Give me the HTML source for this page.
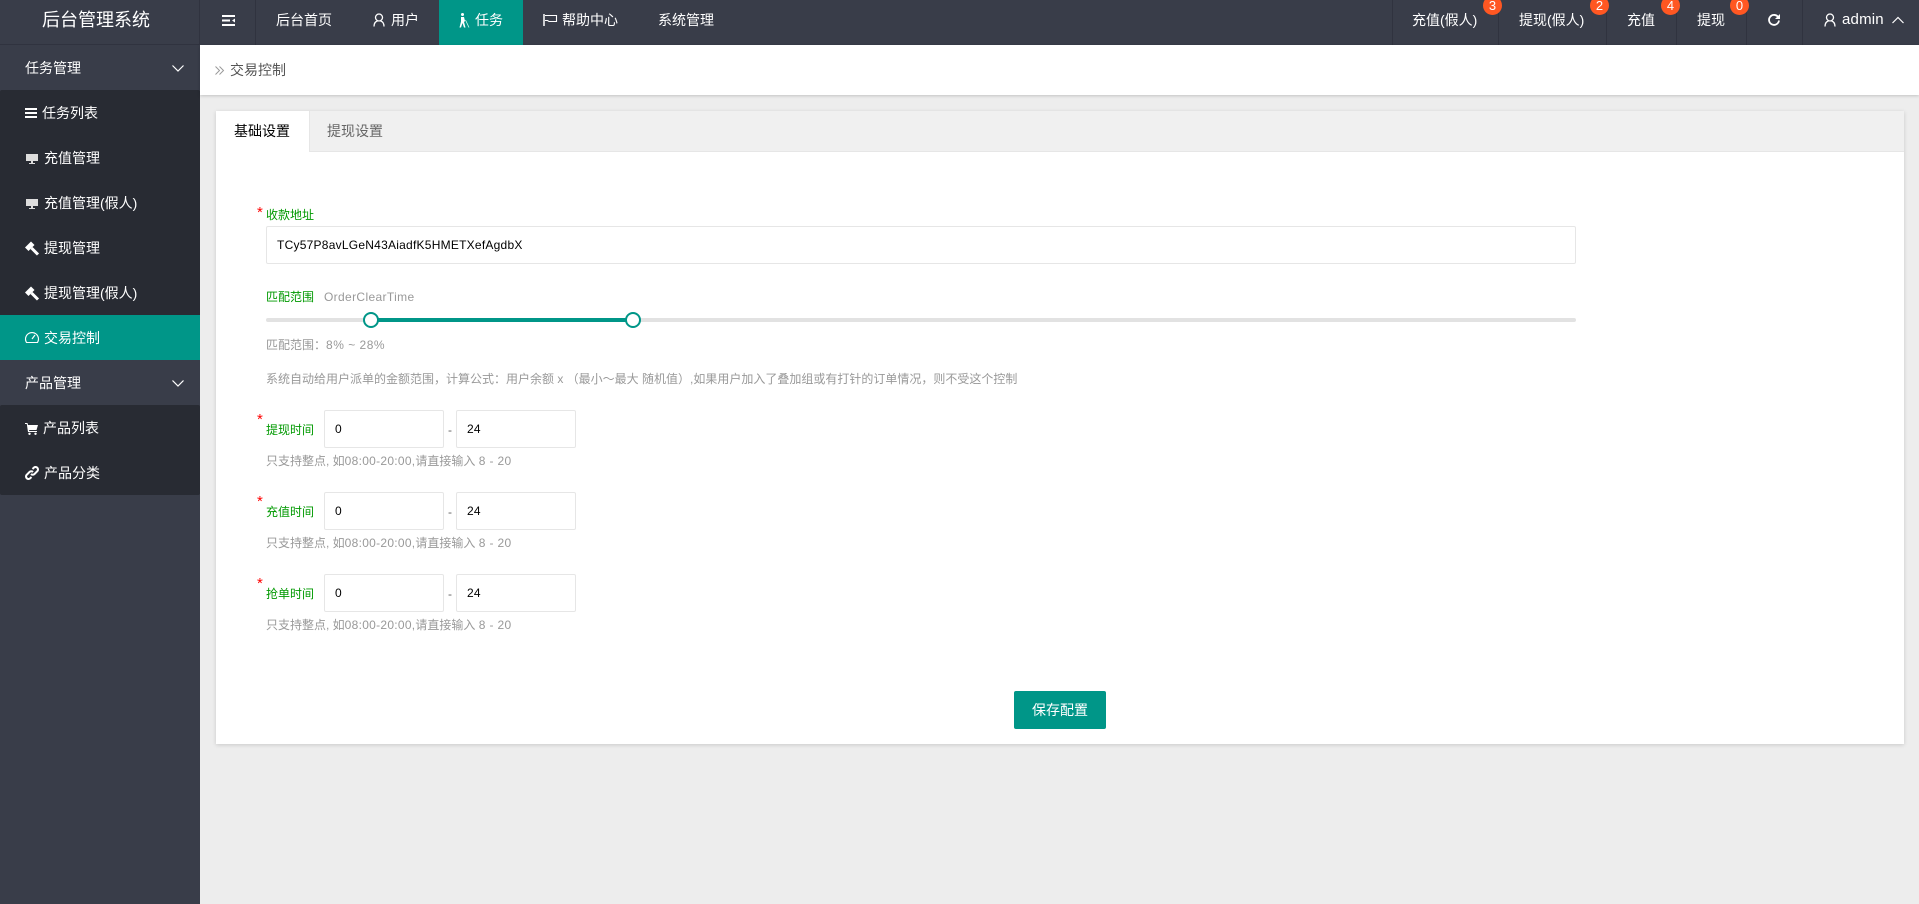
<!DOCTYPE html>
<html lang="zh-CN"><head><meta charset="utf-8"><title>后台管理系统</title>
<style>
*{box-sizing:border-box}
html,body{margin:0;padding:0;width:1919px;height:904px;overflow:hidden;background:#ededed;font-family:"Liberation Sans","Noto Sans CJK SC",sans-serif;font-size:14px;color:#666}
.a{position:absolute}
.t{position:absolute;white-space:nowrap;line-height:20px;height:20px}
.w{color:#fff}
.dv{position:absolute;top:0;width:1px;height:45px;background:#30333f}
.bd{position:absolute;top:-4px;width:19px;height:19px;border-radius:50%;background:#ff5722;color:#fff;text-align:center;font-size:13px;line-height:20px}
.g{color:#090;font-size:12px}
.h{color:#999;font-size:12px}
.s{color:#f00;font-size:15px;line-height:14px;height:14px}
.l{letter-spacing:.28px}
.i{position:absolute;height:38px;background:#fff;border:1px solid #e6e6e6;border-radius:2px;color:#000;font-size:12px;line-height:36px;padding-left:10px;white-space:nowrap;letter-spacing:.24px}
svg{position:absolute;overflow:visible}
</style></head><body>
<div class="a" style="left:0;top:0;width:1919px;height:45px;background:#393d49"></div>
<div class="a" style="left:0;top:44px;width:200px;height:1px;background:#30333f"></div>
<div class="t w" style="left:42px;top:9px;font-size:18px;line-height:22px;height:22px">后台管理系统</div>
<div class="dv" style="left:199px"></div><div class="dv" style="left:255px"></div>
<svg style="left:222px;top:15px" width="13" height="11" viewBox="0 0 13 11"><path d="M0 1h13M0 5.500h8M0 10h13" stroke="#fff" stroke-width="2" fill="none"/><path d="M13 3.500v4l-3-2z" fill="#fff"/></svg>
<div class="t w" style="left:276px;top:10px">后台首页</div>
<svg style="left:373px;top:13px" width="12" height="14" viewBox="0 0 12 14"><circle cx="6" cy="4.500" r="3.500" stroke="#fff" stroke-width="1.300" fill="none"/><path d="M1 13.500c0-3 1.500-5 3.500-5.500M11 13.500c0-3-1.500-5-3.500-5.500" stroke="#fff" stroke-width="1.300" fill="none"/></svg>
<div class="t w" style="left:391px;top:10px">用户</div>
<div class="a" style="left:439px;top:0;width:84px;height:45px;background:#009688"></div>
<svg style="left:458px;top:13px" width="12" height="15" viewBox="0 0 12 15"><circle cx="4.500" cy="1.500" r="1.500" fill="#fff"/><path d="M3 4h3l1 4 -1 1 1.500 5.500H6L4.500 10 3 14.500H1.500L3 8.500z" fill="#fff"/><path d="M7.500 7l3.500 7.500" stroke="#cfe" stroke-width=".8"/></svg>
<div class="t w" style="left:475px;top:10px">任务</div>
<svg style="left:543px;top:14px" width="15" height="12" viewBox="0 0 15 12"><path d="M1 0v12" stroke="#fff" stroke-width="1.500"/><path d="M2 1.500h11.500v6H6l-1.500-1H2" stroke="#fff" stroke-width="1.100" fill="none"/></svg>
<div class="t w" style="left:562px;top:10px">帮助中心</div>
<div class="t w" style="left:658px;top:10px">系统管理</div>

<div class="dv" style="left:1392px"></div><div class="dv" style="left:1498px"></div><div class="dv" style="left:1606px"></div><div class="dv" style="left:1676px"></div><div class="dv" style="left:1746px"></div><div class="dv" style="left:1802px"></div>
<div class="t w" style="left:1412px;top:10px">充值(假人)</div><div class="bd" style="left:1483px">3</div>
<div class="t w" style="left:1519px;top:10px">提现(假人)</div><div class="bd" style="left:1590px">2</div>
<div class="t w" style="left:1627px;top:10px">充值</div><div class="bd" style="left:1661px">4</div>
<div class="t w" style="left:1697px;top:10px">提现</div><div class="bd" style="left:1730px">0</div>
<svg style="left:1768px;top:14px" width="12" height="12" viewBox="0 0 12 12"><path d="M10.300 3.300A5 5 0 1 0 11 6.500" stroke="#fff" stroke-width="1.800" fill="none"/><path d="M12 0v5H7z" fill="#fff"/></svg>
<svg style="left:1824px;top:13px" width="12" height="14" viewBox="0 0 12 14"><circle cx="6" cy="4.500" r="3.500" stroke="#fff" stroke-width="1.300" fill="none"/><path d="M1 13.500c0-3 1.500-5 3.500-5.500M11 13.500c0-3-1.500-5-3.500-5.500" stroke="#fff" stroke-width="1.300" fill="none"/></svg>
<div class="t w" style="left:1842px;top:10px;font-size:15px;letter-spacing:.2px">admin</div>
<svg style="left:1892px;top:16px" width="12" height="8" viewBox="0 0 12 8"><path d="M.5 7L6 1.500 11.500 7" stroke="#fff" stroke-width="1.200" fill="none"/></svg>

<!-- sidebar -->
<div class="a" style="left:0;top:45px;width:200px;height:859px;background:#393d49"></div>
<div class="a" style="left:0;top:90px;width:200px;height:270px;background:#282b33;border-radius:2px 2px 0 0"></div>
<div class="a" style="left:0;top:405px;width:200px;height:90px;background:#282b33;border-radius:2px"></div>
<div class="a" style="left:0;top:315px;width:200px;height:45px;background:#009688"></div>
<div class="t w" style="left:25px;top:58px">任务管理</div>
<svg style="left:172px;top:65px" width="12" height="7" viewBox="0 0 12 7"><path d="M.5 .5L6 6 11.500 .5" stroke="#fff" stroke-width="1.200" fill="none"/></svg>
<svg style="left:25px;top:108px" width="12" height="10" viewBox="0 0 12 10"><path d="M0 1h12M0 5h12M0 9h12" stroke="#fff" stroke-width="2"/></svg>
<div class="t w" style="left:42px;top:103px">任务列表</div>
<svg style="left:25px;top:153px" width="14" height="12" viewBox="0 0 14 12"><path d="M1 1h12v7H1zM6 8h2v2h2v1H4v-1h2z" fill="#ddd"/></svg>
<div class="t w" style="left:44px;top:148px">充值管理</div>
<svg style="left:25px;top:198px" width="14" height="12" viewBox="0 0 14 12"><path d="M1 1h12v7H1zM6 8h2v2h2v1H4v-1h2z" fill="#ddd"/></svg>
<div class="t w" style="left:44px;top:193px">充值管理(假人)</div>
<svg style="left:25px;top:241px" width="14" height="14" viewBox="0 0 14 14"><path d="M0 6.500L6 .5 9.500 4 3.500 10z" fill="#fff"/><path d="M6.500 7L13 13.500" stroke="#fff" stroke-width="3"/></svg>
<div class="t w" style="left:44px;top:238px">提现管理</div>
<svg style="left:25px;top:286px" width="14" height="14" viewBox="0 0 14 14"><path d="M0 6.500L6 .5 9.500 4 3.500 10z" fill="#fff"/><path d="M6.500 7L13 13.500" stroke="#fff" stroke-width="3"/></svg>
<div class="t w" style="left:44px;top:283px">提现管理(假人)</div>
<svg style="left:25px;top:331px" width="14" height="12" viewBox="0 0 14 12"><path d="M1.500 11.500A6.500 6.500 0 1 1 12.500 11.500z" stroke="#fff" stroke-width="1.100" fill="none"/><path d="M7 8l3-4" stroke="#fff" stroke-width="1.200"/></svg>
<div class="t w" style="left:44px;top:328px">交易控制</div>
<div class="t w" style="left:25px;top:373px">产品管理</div>
<svg style="left:172px;top:380px" width="12" height="7" viewBox="0 0 12 7"><path d="M.5 .5L6 6 11.500 .5" stroke="#fff" stroke-width="1.200" fill="none"/></svg>
<svg style="left:25px;top:423px" width="13" height="12" viewBox="0 0 13 12"><path d="M0 0h2.500l.5 2h10l-1.500 5H4l.3 1H12v1H3L1.800 1H0z" fill="#fff"/><circle cx="4.500" cy="10.800" r="1.200" fill="#fff"/><circle cx="10.500" cy="10.800" r="1.200" fill="#fff"/></svg>
<div class="t w" style="left:43px;top:418px">产品列表</div>
<svg style="left:25px;top:466px" width="14" height="14" viewBox="0 0 14 14"><path d="M6 8a2.500 2.500 0 0 0 3.500 0l3-3A2.500 2.500 0 0 0 9 1.500L7.500 3M8 6a2.500 2.500 0 0 0-3.500 0l-3 3A2.500 2.500 0 0 0 5 12.500L6.500 11" stroke="#fff" stroke-width="2" fill="none"/></svg>
<div class="t w" style="left:44px;top:463px">产品分类</div>

<!-- breadcrumb -->
<div class="a" style="left:200px;top:45px;width:1719px;height:50px;background:#fff;box-shadow:0 1px 3px rgba(0,0,0,.18)"></div>
<svg style="left:215px;top:66px" width="10" height="9" viewBox="0 0 10 9"><path d="M.5 .5L4.500 4.500 .5 8.500M4.500 .5L8.500 4.500 4.500 8.500" stroke="#999" stroke-width="1" fill="none"/></svg>
<div class="t" style="left:230px;top:60px;color:#555">交易控制</div>

<!-- card -->
<div class="a" style="left:216px;top:111px;width:1688px;height:633px;background:#fff;box-shadow:0 1px 4px rgba(0,0,0,.15)"></div>
<div class="a" style="left:216px;top:111px;width:1688px;height:41px;background:#f0f0f0;border-bottom:1px solid #e6e6e6"></div>
<div class="a" style="left:216px;top:111px;width:94px;height:41px;background:#fff;border-right:1px solid #e6e6e6"></div>
<div class="t" style="left:234px;top:121px;color:#000">基础设置</div>
<div class="t" style="left:327px;top:121px;color:#666">提现设置</div>

<div class="t s" style="left:257px;top:206px">*</div>
<div class="t g" style="left:266px;top:205px">收款地址</div>
<div class="i" style="left:266px;top:226px;width:1310px">TCy57P8avLGeN43AiadfK5HMETXefAgdbX</div>
<div class="t g" style="left:266px;top:287px">匹配范围</div>
<div class="t" style="left:324px;top:287px;font-size:12px;color:#999;letter-spacing:.35px">OrderClearTime</div>
<div class="a" style="left:266px;top:318px;width:1310px;height:4px;background:#e2e2e2;border-radius:2px"></div>
<div class="a" style="left:371px;top:318px;width:262px;height:4px;background:#009688"></div>
<div class="a" style="left:363px;top:312px;width:16px;height:16px;border-radius:50%;background:#fff;border:2px solid #009688"></div>
<div class="a" style="left:625px;top:312px;width:16px;height:16px;border-radius:50%;background:#fff;border:2px solid #009688"></div>
<div class="t h" style="left:266px;top:335px">匹配范围：<span style="letter-spacing:.5px">8% ~ 28%</span></div>
<div class="t h" style="left:266px;top:369px">系统自动给用户派单的金额范围，计算公式：用户余额 x （最小～最大 随机值）,如果用户加入了叠加组或有打针的订单情况，则不受这个控制</div>

<div class="t s" style="left:257px;top:413px">*</div>
<div class="t g" style="left:266px;top:419.500px">提现时间</div>
<div class="i" style="left:324px;top:410px;width:120px">0</div>
<div class="t" style="left:448px;top:420px;font-size:12px">-</div>
<div class="i" style="left:456px;top:410px;width:120px">24</div>
<div class="t h" style="left:266px;top:451px">只支持整点, 如<span class="l">08:00-20:00,</span>请直接输入 <span style="letter-spacing:.35px">8 - 20</span></div>

<div class="t s" style="left:257px;top:495px">*</div>
<div class="t g" style="left:266px;top:501.500px">充值时间</div>
<div class="i" style="left:324px;top:492px;width:120px">0</div>
<div class="t" style="left:448px;top:502px;font-size:12px">-</div>
<div class="i" style="left:456px;top:492px;width:120px">24</div>
<div class="t h" style="left:266px;top:533px">只支持整点, 如<span class="l">08:00-20:00,</span>请直接输入 <span style="letter-spacing:.35px">8 - 20</span></div>

<div class="t s" style="left:257px;top:577px">*</div>
<div class="t g" style="left:266px;top:583.500px">抢单时间</div>
<div class="i" style="left:324px;top:574px;width:120px">0</div>
<div class="t" style="left:448px;top:584px;font-size:12px">-</div>
<div class="i" style="left:456px;top:574px;width:120px">24</div>
<div class="t h" style="left:266px;top:615px">只支持整点, 如<span class="l">08:00-20:00,</span>请直接输入 <span style="letter-spacing:.35px">8 - 20</span></div>

<div class="a w" style="left:1014px;top:691px;width:92px;height:38px;background:#009688;border-radius:2px;text-align:center;line-height:38px">保存配置</div>
</body></html>
